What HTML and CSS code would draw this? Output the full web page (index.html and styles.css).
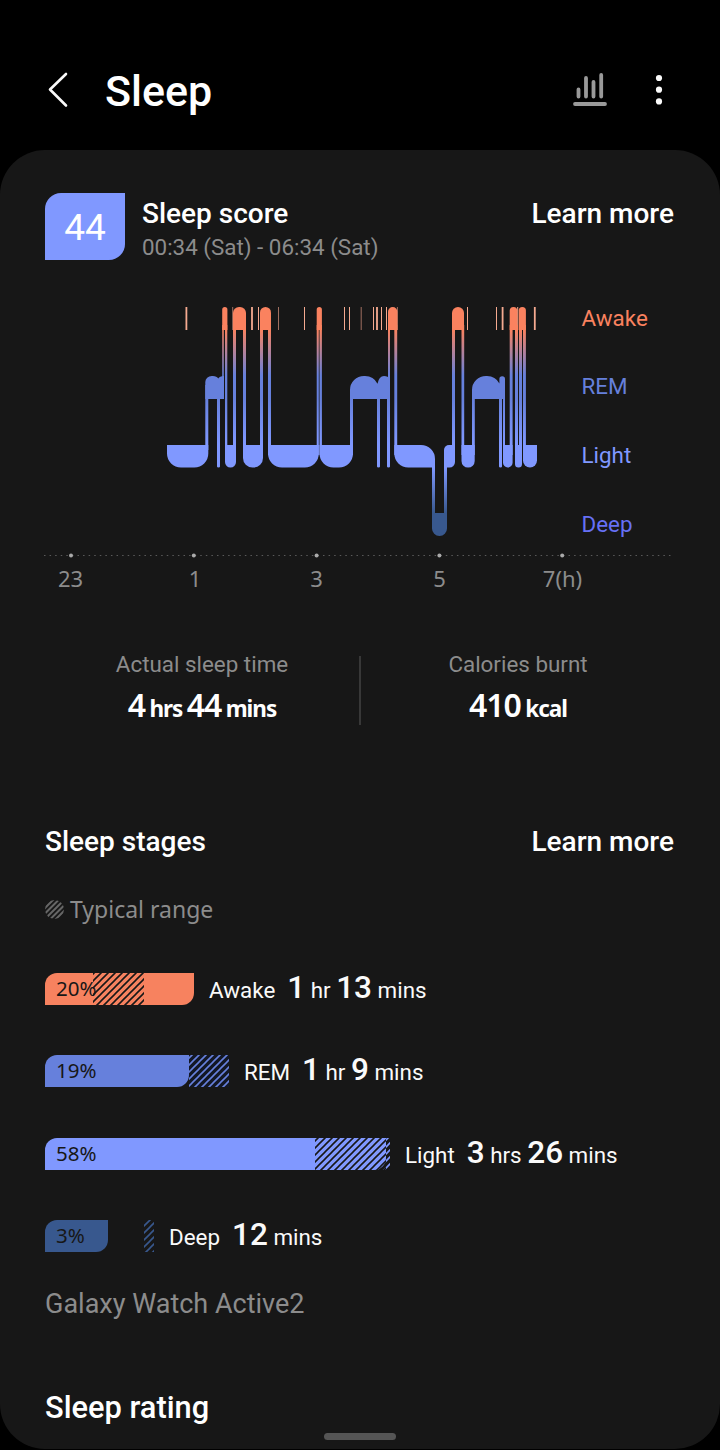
FILE: index.html
```html
<!DOCTYPE html>
<html lang="en">
<head>
  <meta charset="UTF-8">
  <title>Sleep</title>
  <link rel="stylesheet" href="styles.css">
</head>
<body>
  <header class="top-bar">
    <svg class="back" width="22" height="38" viewBox="0 0 22 38"><path d="M19 3 L3 18.5 L19 34.5"/></svg>
    <h1>Sleep</h1>
    <svg class="trend" width="34" height="36" viewBox="0 0 34 36">
      <path class="bars" d="M5.5 17.5V24.5M13 6V24.5M20.5 10V24.5M28.2 3V24.5"/>
      <path class="base" d="M2 32H32"/>
    </svg>
    <svg class="more" width="8" height="32" viewBox="0 0 8 32">
      <circle cx="4" cy="4" r="3.1"/><circle cx="4" cy="15.7" r="3.1"/><circle cx="4" cy="27.4" r="3.1"/>
    </svg>
  </header>

  <main class="card">
    <section class="score">
      <div class="badge">44</div>
      <div class="score-text">
        <h2>Sleep score</h2>
        <p>00:34 (Sat) - 06:34 (Sat)</p>
      </div>
      <a class="learn">Learn more</a>
    </section>

    <svg class="chart" width="630" height="340" viewBox="45 260 630 340">
      <defs>
        <linearGradient id="stage" gradientUnits="userSpaceOnUse" x1="0" y1="307" x2="0" y2="536">
          <stop offset="0" stop-color="#fa825f"/>
          <stop offset="0.1" stop-color="#fa825f"/>
          <stop offset="0.3" stop-color="#6680dc"/>
          <stop offset="0.4" stop-color="#6680dc"/>
          <stop offset="0.6" stop-color="#8098ff"/>
          <stop offset="0.7" stop-color="#8098ff"/>
          <stop offset="0.9" stop-color="#38588e"/>
          <stop offset="1" stop-color="#38588e"/>
        </linearGradient>
      </defs>

      <!-- short awake moments -->
      <g class="ticks">
        <path class="wide" d="M186.4 307V330M252 307V330M377 307V330M502.6 307V330M534.8 307V330"/>
        <path d="M258.5 307V330M304.5 307V330M344.5 307V330M349.5 307V330M373.5 307V330M381.5 307V330M386.5 307V330M467.5 307V330M496.5 307V330M517.7 307V330"/>
        <path class="dim" d="M232.7 307V330M278.5 307V330M361.2 307V330M397.4 307V330"/>
      </g>

      <g fill="url(#stage)">
        <!-- awake -->
        <path d="M222.2 330V309.7a2.6 2.6 0 0 1 5.2 0V330z"/>
        <path d="M233 330V313a6 6 0 0 1 6-6h1a6 6 0 0 1 6 6V330z"/>
        <path d="M260 330V312.5a5.5 5.5 0 0 1 11 0V330z"/>
        <path d="M316.7 330V309.6a2.6 2.6 0 0 1 5.2 0V330z"/>
        <path d="M388 330V311.7a4.7 4.7 0 0 1 9.4 0V330z"/>
        <path d="M452 330V313a6 6 0 0 1 12 0V330z"/>
        <path d="M509.7 330V310.8a3.8 3.8 0 0 1 7.6 0V330z"/>
        <path d="M518.7 330V310.6a3.6 3.6 0 0 1 7.2 0V330z"/>
        <!-- rem -->
        <path d="M205.3 399V382a6.5 6 0 0 1 6.5-6h1q4 0 5.5 2.5q1.2-2.5 5.7-2.5V399z"/>
        <path d="M350 399V390a14 14 0 0 1 14-14h1a14 14 0 0 1 12.5 7.7Q379 376 384 376q4 0 6 3V399z"/>
        <path d="M472 399V390a14 14 0 0 1 14-14h1a14 14 0 0 1 12.4 7.5V379a2.8 2.8 0 0 1 5.6 0V399z"/>
        <!-- light -->
        <path d="M167 445H208.3V453.5a14 14 0 0 1-14 14H181a14 14 0 0 1-14-14z"/>
        <path d="M225 445H236V462a5.5 5.5 0 0 1-11 0z"/>
        <path d="M243 445H263V458a9.5 9.5 0 0 1-9.5 9.5h-1a9.5 9.5 0 0 1-9.5-9.5z"/>
        <path d="M268 445H318.8V453.5a14 14 0 0 1-14 14H282a14 14 0 0 1-14-14z"/>
        <path d="M319.5 445H353V453.5a14 14 0 0 1-14 14H333.5a14 14 0 0 1-14-14z"/>
        <path d="M394.3 445H421a14 14 0 0 1 14 14V467.5H408.3a14 14 0 0 1-14-14z"/>
        <path d="M444 467.5V450a5 5 0 0 1 5-5H455V462a5.5 5.5 0 0 1-5.5 5.5z"/>
        <path d="M461.5 445H474.7V461a6.5 6.5 0 0 1-13.2 0z"/>
        <path d="M503 445H512.6V462.7a4.8 4.8 0 0 1-9.6 0z"/>
        <path d="M515 445H522V464a3.5 3.5 0 0 1-7 0z"/>
        <path d="M523 445H537V460.5a7 7 0 0 1-14 0z"/>
        <!-- deep -->
        <path d="M432 513H447V528.5a7.5 7.5 0 0 1-15 0z"/>
        <!-- moves between stages -->
        <path d="M205.3 385h3v65h-3zM217 398h3v68.5a1.5 1 0 0 1-3 0zM222.2 325h1.6v60h-1.6zM225 325h2.3v130H225zM233 325h3v130h-3zM243 325h3v130h-3zM260 325h3v130h-3zM268 325h3v130h-3z"/>
        <path d="M316.7 325h2.1v130h-2.1zM319.5 325h2.4v130h-2.4zM350 390h3v65h-3zM377 398h3v68.5a1.5 1 0 0 1-3 0zM387 398h3v68.5a1.5 1 0 0 1-3 0zM388 325h2v60h-2zM394.3 325h2.9v130h-2.9z"/>
        <path d="M432 462h3v55h-3zM444 455h3v62h-3zM452 325h3v130h-3zM461.5 325h2.7v130h-2.7zM472 390h2.8v65H472zM499 398h3v68.5a1.5 1 0 0 1-3 0zM503 398h2v60h-2zM509.7 325h2.9v130h-2.9zM515 325h3v130h-3zM519 325h3v130h-3zM523 325h2.9v130h-2.9z"/>
      </g>

      <path class="axis" d="M44 555.5H671"/>
      <g class="hours">
        <circle cx="71" cy="555.5" r="2"/><circle cx="193.8" cy="555.5" r="2"/><circle cx="316.6" cy="555.5" r="2"/><circle cx="439.4" cy="555.5" r="2"/><circle cx="562.2" cy="555.5" r="2"/>
        <text x="70.5" y="587">23</text>
        <text x="195" y="587">1</text>
        <text x="316.5" y="587">3</text>
        <text x="439.5" y="587">5</text>
        <text x="562.5" y="587">7(h)</text>
      </g>
      <g class="stage-names">
        <text class="awake" x="581.5" y="326">Awake</text>
        <text class="rem" x="581.5" y="394">REM</text>
        <text class="light" x="581.5" y="463">Light</text>
        <text class="deep" x="581.5" y="532">Deep</text>
      </g>
    </svg>

    <section class="totals">
      <div class="total">
        <h3>Actual sleep time</h3>
        <p><b>4</b> hrs <b>44</b> mins</p>
      </div>
      <div class="total">
        <h3>Calories burnt</h3>
        <p><b>410</b> kcal</p>
      </div>
    </section>

    <section class="stages">
      <div class="section-head">
        <h2>Sleep stages</h2>
        <a class="learn">Learn more</a>
      </div>

      <div class="typical">
        <svg width="19" height="19" viewBox="0 0 19 19">
          <clipPath id="dot"><circle cx="9.5" cy="9.5" r="9.5"/></clipPath>
          <path clip-path="url(#dot)" d="M-3 11L11 -3M-3 16.5L16.5 -3M-3 22L22 -3M2.5 22L22 2.5M8 22L22 8"/>
        </svg>
        <span>Typical range</span>
      </div>

      <svg class="patterns" width="0" height="0">
        <defs>
          <pattern id="hatch-dark" width="7" height="7" patternUnits="userSpaceOnUse"><path d="M-1 1L1 -1M0 7L7 0M6 8L8 6" stroke="#171717" stroke-width="1.6"/></pattern>
          <pattern id="hatch-rem" width="7" height="7" patternUnits="userSpaceOnUse"><path d="M-1 1L1 -1M0 7L7 0M6 8L8 6" stroke="#6680dc" stroke-width="1.6"/></pattern>
          <pattern id="hatch-light" width="7" height="7" patternUnits="userSpaceOnUse"><path d="M-1 1L1 -1M0 7L7 0M6 8L8 6" stroke="#8098ff" stroke-width="1.6"/></pattern>
          <pattern id="hatch-deep" width="7" height="7" patternUnits="userSpaceOnUse"><path d="M-1 1L1 -1M0 7L7 0M6 8L8 6" stroke="#38588e" stroke-width="1.6"/></pattern>
        </defs>
      </svg>

      <div class="stage">
        <svg width="149" height="32">
          <path fill="#f7825f" d="M0 32V12A12 12 0 0 1 12 0H149V20A12 12 0 0 1 137 32z"/>
          <text x="11" y="23">20%</text>
          <rect x="48" width="51" height="32" fill="url(#hatch-dark)"/>
        </svg>
        <p><span>Awake</span><b>1</b> hr <b>13</b> mins</p>
      </div>
      <div class="stage">
        <svg width="184" height="32">
          <rect x="144" width="40" height="32" fill="#121725"/>
          <rect x="144" width="40" height="32" fill="url(#hatch-rem)"/>
          <path fill="#6680dc" d="M0 32V12A12 12 0 0 1 12 0H144V20A12 12 0 0 1 132 32z"/>
          <text x="11" y="23">19%</text>
        </svg>
        <p><span>REM</span><b>1</b> hr <b>9</b> mins</p>
      </div>
      <div class="stage">
        <svg width="345" height="32">
          <rect x="330" width="15" height="32" fill="url(#hatch-light)"/>
          <path fill="#8098ff" d="M0 32V12A12 12 0 0 1 12 0H341V20A12 12 0 0 1 329 32z"/>
          <rect x="270" width="71" height="32" fill="url(#hatch-dark)"/>
          <text x="11" y="23">58%</text>
        </svg>
        <p><span>Light</span><b>3</b> hrs <b>26</b> mins</p>
      </div>
      <div class="stage">
        <svg width="109" height="32">
          <path fill="#38588e" d="M0 32V12A12 12 0 0 1 12 0H63V20A12 12 0 0 1 51 32z"/>
          <rect x="99" width="10" height="32" fill="url(#hatch-deep)"/>
          <text x="11" y="23">3%</text>
        </svg>
        <p><span>Deep</span><b>12</b> mins</p>
      </div>
      <p class="device">Galaxy Watch Active2</p>
    </section>

    <section class="rating">
      <h2>Sleep rating</h2>
    </section>
    <div class="home-handle"></div>
  </main>
</body>
</html>
```
FILE: styles.css
```css
* {
  box-sizing: border-box;
}
body {
  margin: 0;
  background: #000;
  color: #fff;
  font-family: Roboto, sans-serif;
}
h1, h2, h3, p {
  margin: 0;
  font-weight: 500;
}
.top-bar {
  height: 150px;
  padding: 31px 57px 0 47px;
  display: flex;
  align-items: center;
}
.back {
  margin-bottom: 2px;
  fill: none;
  stroke: #fafafa;
  stroke-width: 2.6;
  stroke-linecap: round;
  stroke-linejoin: round;
}
h1 {
  margin-left: 36px;
  padding-top: 1px;
  font-size: 43px;
  line-height: 50px;
}
.trend {
  margin: 0 48px 2px auto;
  fill: none;
  stroke: #999;
  stroke-width: 3.8;
  stroke-linecap: round;
}
.more {
  margin-bottom: 2px;
  fill: #fafafa;
}
.card {
  height: 1299px;
  padding: 43px 45px 0;
  background: #171717;
  border-radius: 45px;
}
.score {
  height: 67px;
  display: flex;
}
.badge {
  width: 80px;
  height: 67px;
  background: #8098ff;
  border-radius: 16px 0;
  font-size: 37px;
  line-height: 70px;
  text-align: center;
}
.score-text {
  margin-left: 17px;
}
h2, .learn {
  font-size: 28px;
  font-weight: 500;
  line-height: 42px;
}
.score-text p {
  color: #8c8c8c;
  font-size: 22.4px;
  font-weight: 400;
  line-height: 25px;
}
.learn {
  margin: 0 1px 0 auto;
}
.chart {
  display: block;
  overflow: visible;
}
.ticks path {
  stroke: #f5aa90;
  stroke-width: 1;
}
.ticks .wide {
  stroke-width: 1.8;
}
.ticks .dim {
  stroke: #a06f60;
}
.axis {
  stroke: #5a5a5a;
  stroke-width: 1.2;
  stroke-dasharray: 1.5 4.08;
}
.hours {
  fill: #8c8c8c;
  font-family: "Noto Sans", sans-serif;
  font-size: 22px;
  text-anchor: middle;
}
.hours circle {
  fill: #aaa;
}
.stage-names {
  font-size: 22.4px;
}
.awake { fill: #fa825f; }
.rem { fill: #6680dc; }
.light { fill: #8098ff; }
.deep { fill: #6670f5; }

.totals {
  margin-top: 56px;
  height: 69px;
  display: grid;
  grid-template-columns: 314px 316px;
  grid-template-rows: 69px;
  text-align: center;
}
.total + .total {
  border-left: 2px solid #383838;
}
.total h3 {
  margin-top: -5px;
  color: #8c8c8c;
  font-size: 22.4px;
  font-weight: 400;
  line-height: 27px;
}
.total p {
  font-family: "Noto Sans", sans-serif;
  font-size: 22.5px;
  font-weight: 700;
  line-height: 38px;
  margin-top: 8px;
  letter-spacing: -1px;
  word-spacing: -0.5px;
}
.total b {
  font-size: 32px;
  font-weight: 600;
}
.stages {
  margin-top: 96px;
}
.section-head {
  display: flex;
}
.typical {
  height: 40px;
  margin-top: 26px;
  display: flex;
  align-items: center;
  gap: 6px;
  color: #8c8c8c;
  font-family: "Noto Sans", sans-serif;
  font-size: 23px;
}
.typical svg {
  stroke: #666;
  stroke-width: 2;
}
.patterns {
  display: block;
}
.stage {
  height: 32px;
  margin-bottom: 50.4px;
  display: flex;
  align-items: center;
}
.patterns + .stage {
  margin-top: 44px;
}
.stage text {
  fill: #171717;
  font-family: "Noto Sans", sans-serif;
  font-size: 20.5px;
}
.stage p {
  margin-left: 15px;
  color: #fafafa;
  font-size: 22.4px;
  font-weight: 400;
  line-height: 32px;
}
.stage b {
  font-size: 31.5px;
  font-weight: 500;
}
.stage span {
  margin-right: 12px;
}
.device {
  margin-top: -18px;
  color: #8c8c8c;
  font-size: 27px;
  font-weight: 400;
  line-height: 39px;
}
.rating {
  margin-top: 64px;
}
.rating h2 {
  font-size: 30.8px;
  line-height: 40px;
}
.home-handle {
  width: 72px;
  height: 7px;
  margin: 5px auto 0;
  background: #555;
  border-radius: 4px;
}
```
